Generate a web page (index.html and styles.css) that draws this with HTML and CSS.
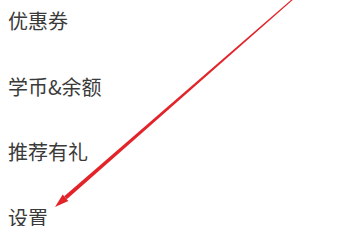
FILE: index.html
```html
<!DOCTYPE html>
<html lang="zh">
<head>
<meta charset="utf-8">
<link rel="stylesheet" href="styles.css">
</head>
<body>
<div class="page">
  <ul class="menu">
    <li class="menu-item">优惠券</li>
    <li class="menu-item">学币&amp;余额</li>
    <li class="menu-item">推荐有礼</li>
    <li class="menu-item">设置</li>
  </ul>
  <svg class="arrow" width="362" height="226" viewBox="0 0 362 226">
    <polygon points="293.4,-0.6 292.6,-1.4 64.2,196.3 66.8,199.3" fill="#e2242a"/>
    <polygon points="55,207 68.3,201.0 62.7,194.6" fill="#e2242a"/>
  </svg>
</div>
</body>
</html>
```
FILE: styles.css
```css
html, body {
  margin: 0;
  padding: 0;
  background: #ffffff;
}
.page {
  position: relative;
  width: 362px;
  height: 226px;
  overflow: hidden;
}
.menu {
  list-style: none;
  margin: 0;
  padding: 9px 0 0 8px;
  display: flex;
  flex-direction: column;
  gap: 41.5px;
}
.menu-item {
  font-family: "Noto Sans CJK SC", "Noto Sans", sans-serif;
  font-size: 20px;
  line-height: 24px;
  color: #3a3a3a;
}
.arrow {
  position: absolute;
  left: 0;
  top: 0;
}
```
